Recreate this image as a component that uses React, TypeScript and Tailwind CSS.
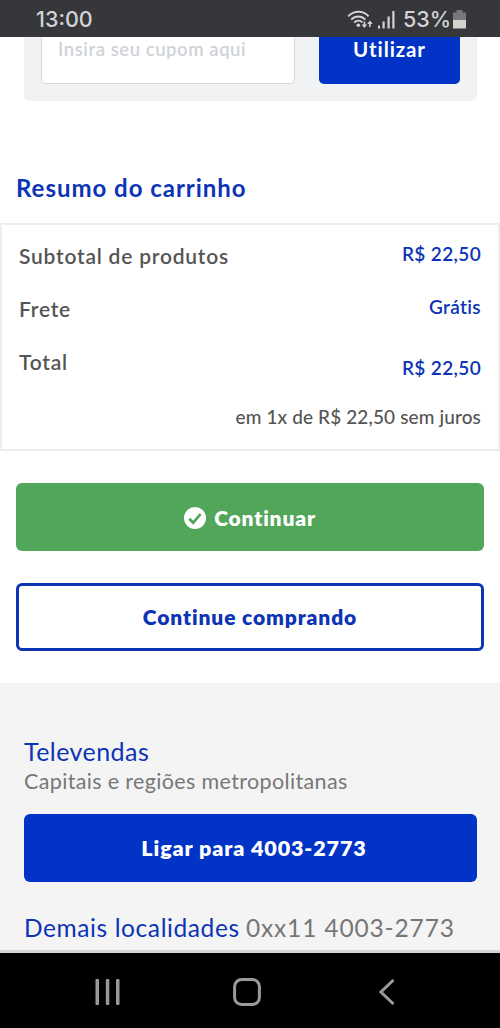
import React from "react";

type SummaryRow = {
  label: string;
  value: string;
  lowered?: boolean;
};

const rows: SummaryRow[] = [
  { label: "Subtotal de produtos", value: "R$ 22,50" },
  { label: "Frete", value: "Grátis" },
  { label: "Total", value: "R$ 22,50", lowered: true },
];

function WifiIcon() {
  return (
    <svg width="26" height="20" viewBox="0 0 26 20" fill="none" stroke="#d3d3d5">
      <path d="M1.2 6.3C7 .3 16 .3 21.600 6.300" strokeWidth="1.900" />
      <path d="M4.200 9.600c4-4.200 10.200-4.200 14.200 0" strokeWidth="1.900" />
      <path d="M7.200 12.600c2.400-2.500 5.800-2.500 8.200-.4" strokeWidth="1.900" />
      <circle cx="11.300" cy="15.200" r="1.800" fill="#d3d3d5" stroke="none" />
      <path d="M17.400 11.500v4M22.900 17v-4" strokeWidth="1.600" />
      <path d="M14.600 14.600h5.600l-2.800 3.400zM20.100 13.900h5.600l-2.800-3.400z" fill="#d3d3d5" stroke="none" />
    </svg>
  );
}

function SignalIcon() {
  return (
    <svg width="17" height="18" viewBox="0 0 17 18" fill="#d3d3d5">
      <rect x="0" y="14.500" width="2" height="3" />
      <rect x="4.500" y="10.500" width="2.200" height="7" />
      <rect x="9.500" y="5.500" width="2.200" height="12" />
      <rect x="14.300" y="0" width="2.200" height="17.500" />
    </svg>
  );
}

function BatteryIcon() {
  return (
    <svg width="13" height="19" viewBox="0 0 13 19">
      <path d="M3.500 0h6v2.500H13V10H0V2.500h3.500z" fill="#77787b" />
      <path d="M0 10h13v8.500H0z" fill="#d3d3d5" />
    </svg>
  );
}

function StatusBar() {
  return (
    <header className="flex h-[37px] shrink-0 items-center bg-[#36373b] pl-9 pr-[34px] pt-[2px] font-['Inter',sans-serif] text-[21.5px] font-medium text-[#d3d3d5]">
      <span>13:00</span>
      <div className="ml-auto flex items-center">
        <WifiIcon />
        <span className="ml-[5px] mr-[8px]">
          <SignalIcon />
        </span>
        <span className="w-[48px] whitespace-nowrap">53%</span>
        <span className="ml-[2px]">
          <BatteryIcon />
        </span>
      </div>
    </header>
  );
}

function Coupon() {
  return (
    <section className="mx-6 flex h-16 w-[453px] items-start rounded-b-[5px] bg-[#f1f2f4] pl-[17px]">
      <div className="h-[47px] w-[254px] rounded-b-[5px] border border-t-0 border-[#d4d7da] bg-white pl-4 text-[18.5px] font-semibold leading-[25px] tracking-[0.55px] text-[#cfd3d8]">
        Insira seu cupom aqui
      </div>
      <button className="ml-6 flex h-[47px] w-[141px] justify-center rounded-b-[5px] bg-[#0033c6] text-[20.5px] font-bold leading-[25px] tracking-[0.9px] text-white">
        Utilizar
      </button>
    </section>
  );
}

function Summary() {
  return (
    <section>
      <h2 className="mt-[69px] pl-4 text-[24px] font-bold leading-9 tracking-[0.97px] text-[#0c34b4]">
        Resumo do carrinho
      </h2>
      <div className="mt-[17px] h-[228px] border-2 border-[#ebeff1] pl-[17px] pr-[17px] pt-1">
        {rows.map((row) => (
          <div key={row.label} className="flex h-[53px] items-center justify-between">
            <span className="text-[21px] font-semibold tracking-[0.77px] text-[#555]">
              {row.label}
            </span>
            <span
              className={`text-[19px] font-semibold tracking-[0.35px] text-[#0c34b4] ${
                row.lowered ? "pt-3.5" : "pb-0.5"
              }`}
            >
              {row.value}
            </span>
          </div>
        ))}
        <p className="mt-[14px] text-right text-[19px] font-medium leading-[30px] tracking-[0.12px] text-[#555]">
          em 1x de R$ 22,50 sem juros
        </p>
      </div>
    </section>
  );
}

function Actions() {
  return (
    <div className="flex flex-col gap-8 px-4 py-8">
      <button className="flex h-[68px] items-center justify-center gap-2 rounded-[6px] bg-[#51a65a] pt-px text-[21px] font-extrabold tracking-[0.85px] text-white">
        <svg width="22" height="22" viewBox="0 0 22 22">
          <circle cx="11" cy="11" r="11" fill="#fff" />
          <path d="M5.300 11.700l3.900 4 7.400-8.700" fill="none" stroke="#51a65a" strokeWidth="2.700" />
        </svg>
        <span>Continuar</span>
      </button>
      <button className="flex h-[68px] items-center justify-center rounded-[6px] border-[3px] border-[#0c34b4] text-[21px] font-extrabold tracking-[0.88px] text-[#0c34b4]">
        Continue comprando
      </button>
    </div>
  );
}

function Televendas() {
  return (
    <footer className="min-h-0 flex-1 border-b-[3px] border-[#d5d5d5] bg-[#f4f4f4] px-6 pt-[52px]">
      <h3 className="text-[25px] leading-[32px] tracking-[0.45px] text-[#0c34b4]">
        Televendas
      </h3>
      <p className="text-[21.5px] leading-[28px] tracking-[0.35px] text-[#777]">
        Capitais e regiões metropolitanas
      </p>
      <button className="mt-[19px] flex h-[68px] w-[453px] items-center justify-center rounded-[6px] bg-[#0033c6] pl-[7px] text-[21.5px] font-extrabold tracking-[0.87px] text-white">
        Ligar para 4003-2773
      </button>
      <p className="mt-[29px] whitespace-nowrap text-[24.5px] leading-[34px] text-[#777]">
        <span className="tracking-[0.6px] text-[#0c34b4]">Demais localidades</span>{" "}
        <span className="tracking-[0.85px]">0xx11 4003-2773</span>
      </p>
    </footer>
  );
}

function NavBar() {
  return (
    <nav className="flex h-[75px] shrink-0 items-center bg-black pl-[95px] pt-[3px]">
      <svg width="25" height="26" viewBox="0 0 25 26" fill="#999">
        <rect x="0.500" width="3.500" height="26" rx="1" />
        <rect x="10.800" width="3.500" height="26" rx="1" />
        <rect x="21" width="3.500" height="26" rx="1" />
      </svg>
      <svg className="ml-[113px]" width="28" height="28" viewBox="0 0 28 28" fill="none">
        <rect x="1.600" y="1.600" width="24.800" height="24.800" rx="7" stroke="#999" strokeWidth="3" />
      </svg>
      <svg className="ml-[118px]" width="16" height="26" viewBox="0 0 16 26" fill="none">
        <path d="M14.500 1L2 13l12.500 12" stroke="#999" strokeWidth="3" />
      </svg>
    </nav>
  );
}

export default function App() {
  return (
    <div className="flex h-[1028px] w-[500px] flex-col overflow-hidden bg-white font-['Lato',sans-serif]">
      <StatusBar />
      <Coupon />
      <Summary />
      <Actions />
      <Televendas />
      <NavBar />
    </div>
  );
}
